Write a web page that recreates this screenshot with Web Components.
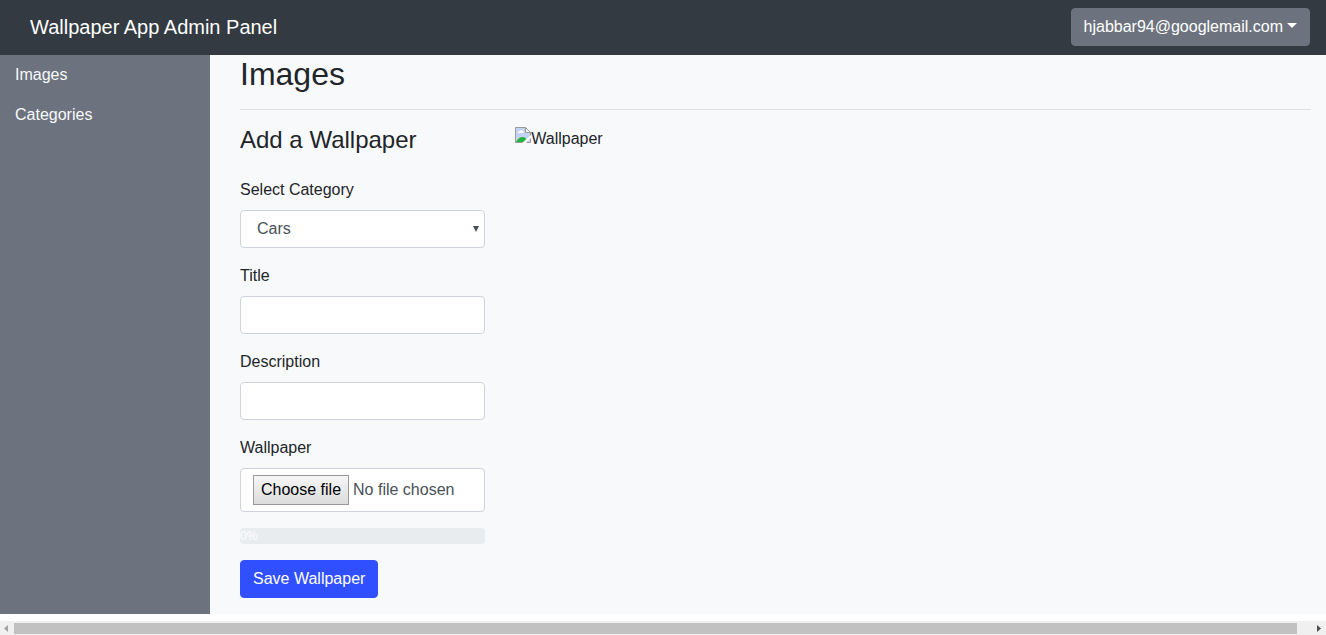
<!DOCTYPE html>
<html lang="en">
<head>
<meta charset="utf-8">
<title>Wallpaper App Admin Panel</title>
<style>
  body { margin: 0; background: #fff; color: #212529; font: 16px/24px "Liberation Sans", Arial, sans-serif; }
</style>
</head>
<body>
<admin-app>
  <admin-header slot="header" heading="Wallpaper App Admin Panel">hjabbar94@googlemail.com</admin-header>
  <side-nav slot="nav">
    <nav-item href="#images">Images</nav-item>
    <nav-item href="#categories">Categories</nav-item>
  </side-nav>
  <page-section heading="Images">
    <wallpaper-form></wallpaper-form>
    <wallpaper-preview>Wallpaper</wallpaper-preview>
  </page-section>
  <scroll-strip slot="footer"></scroll-strip>
</admin-app>
<script>
const define = (name, html, setup) => {
  const template = document.createElement('template');
  template.innerHTML = '<style>*{box-sizing:border-box}</style>' + html;
  customElements.define(name, class extends HTMLElement {
    connectedCallback() {
      if (this.shadowRoot) return;
      const root = this.attachShadow({ mode: 'open' });
      root.append(template.content.cloneNode(true));
      if (setup) setup(this, root);
    }
  });
};

define('admin-app', `
  <style>
    :host { display: flex; flex-direction: column; min-height: 100vh; }
    .body { flex: 1; display: grid; grid-template-columns: 210px minmax(0, 1fr); background: #f8f9fb; }
    main { padding: 0 15px 16px 30px; }
    .foot { padding-top: 7px; background: #fff; }
  </style>
  <slot name="header"></slot>
  <div class="body"><slot name="nav"></slot><main><slot></slot></main></div>
  <div class="foot"><slot name="footer"></slot></div>`);

define('admin-header', `
  <style>
    :host { display: block; }
    header { display: flex; align-items: center; justify-content: space-between; min-height: 55px; padding: 8px 16px 9px 30px; background: #333a41; }
    a { color: #fff; font-size: 20px; line-height: 30px; text-decoration: none; }
    button { display: flex; align-items: center; gap: 4px; font: inherit; color: #fff; background: #6c737e; border: 1px solid #6c737e; border-radius: 4px; padding: 6px 12px; }
    svg { display: block; margin-bottom: 4px; }
  </style>
  <header><a href="#home"></a>
    <button type="button" aria-haspopup="true"><slot></slot><svg width="10" height="5" viewBox="0 0 10 5" aria-hidden="true"><path d="M0 0h10L5 5z" fill="#fff"/></svg></button>
  </header>`, (host, root) => { root.querySelector('a').textContent = host.getAttribute('heading'); });

define('side-nav', `
  <style>:host { display: block; background: #6c737e; } nav { display: flex; flex-direction: column; }</style>
  <nav><slot></slot></nav>`);

define('nav-item', `
  <style>:host { display: block; } a { display: block; padding: 8px 15px; color: #f8f9fa; text-decoration: none; }</style>
  <a><slot></slot></a>`, (host, root) => { root.querySelector('a').setAttribute('href', host.getAttribute('href')); });

define('page-section', `
  <style>
    :host { display: block; }
    h1 { margin: 0; font-size: 32px; line-height: 38px; font-weight: 400; }
    hr { border: 0; border-top: 1px solid #dee0e3; margin: 16px 0; }
    .grid { display: grid; grid-template-columns: repeat(4, minmax(0, 1fr)); gap: 30px; }
  </style>
  <h1></h1><hr><div class="grid"><slot></slot></div>`, (host, root) => { root.querySelector('h1').textContent = host.getAttribute('heading'); });

define('wallpaper-form', `
  <style>
    :host { display: block; }
    h2 { margin: 0 0 24px; font-size: 24px; line-height: 28px; font-weight: 400; }
    form { display: grid; gap: 16px; margin: 0; justify-items: stretch; }
    button { justify-self: start; font: inherit; color: #fff; background: #304ffe; border: 1px solid #304ffe; border-radius: 4px; padding: 6px 12px; }
  </style>
  <h2>Add a Wallpaper</h2>
  <form>
    <form-field type="select" label="Select Category" options="Cars"></form-field>
    <form-field type="text" label="Title"></form-field>
    <form-field type="text" label="Description"></form-field>
    <form-field type="file" label="Wallpaper"></form-field>
    <upload-progress value="0"></upload-progress>
    <button type="button">Save Wallpaper</button>
  </form>`);

define('form-field', `
  <style>
    :host { display: block; }
    label { display: block; margin-bottom: 8px; }
    .control { position: relative; }
    input, select { display: block; width: 100%; height: 38px; margin: 0; font: inherit; color: #495057; background: #fff; border: 1px solid #ced4da; border-radius: 4px; padding: 6px 12px; }
    select { appearance: none; padding: 6px 16px; }
    .file { display: flex; align-items: center; gap: 4px; height: 44px; padding: 6px 12px; color: #495057; background: #fff; border: 1px solid #ced4da; border-radius: 4px; white-space: nowrap; }
    .choose { padding: 2px 7px; color: #000; border: 1px solid #999; background: linear-gradient(#f6f6f6, #dcdcdc); }
    input[type=file] { position: absolute; inset: 0; height: 100%; opacity: 0; }
    svg { position: absolute; right: 6px; top: 16px; pointer-events: none; }
  </style>
  <label for="control"></label><div class="control"></div>`, (host, root) => {
    root.querySelector('label').textContent = host.getAttribute('label');
    const type = host.getAttribute('type');
    const box = root.querySelector('.control');
    if (type === 'select') {
      box.innerHTML = '<select id="control"></select><svg width="6" height="6" viewBox="0 0 6 6" aria-hidden="true"><path d="M0 0h6L3 6z" fill="#495057"/></svg>';
      host.getAttribute('options').split(',').forEach(name => box.querySelector('select').add(new Option(name)));
    } else if (type === 'file') {
      box.innerHTML = '<div class="file"><span class="choose">Choose file</span><span class="name">No file chosen</span></div><input id="control" type="file">';
      const input = box.querySelector('input');
      input.addEventListener('change', () => {
        box.querySelector('.name').textContent = input.files.length ? input.files[0].name : 'No file chosen';
      });
    } else {
      box.innerHTML = '<input id="control">';
      box.firstChild.type = type;
    }
  });

define('upload-progress', `
  <style>
    :host { display: block; height: 16px; border-radius: 4px; background: #e9ecef; color: #fff; font-size: 12px; line-height: 16px; }
    .bar { height: 100%; background: #304ffe; border-radius: 4px; }
  </style>
  <div class="bar" role="progressbar" aria-label="Upload" aria-valuemin="0" aria-valuemax="100"></div>`, (host, root) => {
    const value = host.getAttribute('value');
    const bar = root.querySelector('.bar');
    bar.style.width = value + '%';
    bar.setAttribute('aria-valuenow', value);
    bar.textContent = value + '%';
  });

define('wallpaper-preview', `
  <style>:host { display: flex; align-items: flex-start; padding-top: 1px; } svg { flex: none; }</style>
  <svg width="16" height="16" viewBox="0 0 16 16" aria-hidden="true">
    <path d="M.5.5h10l5 5v10H.5z" fill="#c3d3f7"/>
    <path d="M3 6c0-1.500 1-2 2-1.500C5.500 2.500 8 3 8 4.500 9 4.500 9 6 8.500 6z" fill="#fff"/>
    <path d="M1 15c1-2 3.500-5 6.500-5 2.500 0 4 1.500 5 5z" fill="#23b33c"/>
    <path d="M.5.5h10l5 5v10H.5z" fill="none" stroke="#9a9a9a"/>
    <path d="M10.500.5v5h5z" fill="#fff" stroke="#9a9a9a"/>
    <path d="M7 16 16 8v3l-5 5z" fill="#f8f9fb"/>
  </svg><slot></slot>`);

define('scroll-strip', `
  <style>
    :host { display: flex; align-items: center; height: 14px; background: #f0f0f0; }
    svg { flex: none; display: block; }
    .track { flex: 1; }
    .thumb { width: calc(100% - 15px); height: 11px; background: #c1c1c1; }
  </style>
  <svg width="14" height="14" viewBox="0 0 14 14" aria-hidden="true"><path d="M8 4v7L4 7.500z" fill="#a3a3a3"/></svg>
  <div class="track"><div class="thumb"></div></div>
  <svg width="14" height="14" viewBox="0 0 14 14" aria-hidden="true"><path d="M5 4v7l4-3.500z" fill="#505050"/></svg>`);
</script>
</body>
</html>
